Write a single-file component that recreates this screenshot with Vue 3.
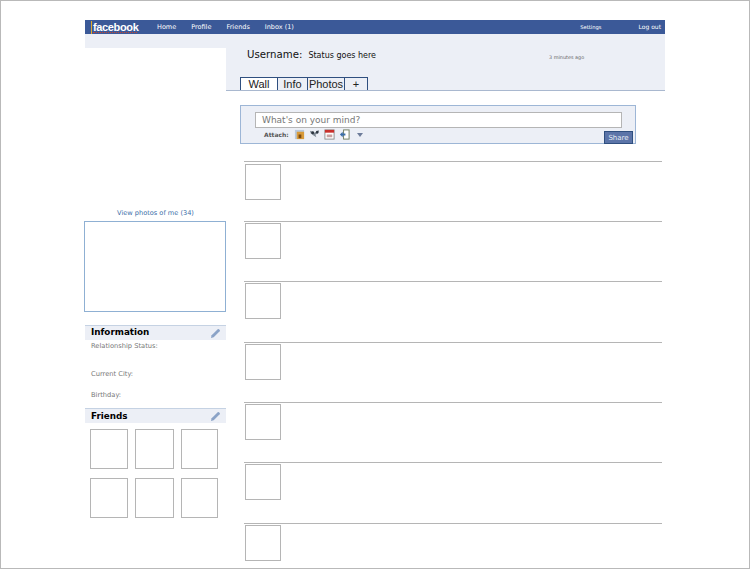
<script setup>
const navLinks = ['Home', 'Profile', 'Friends', 'Inbox (1)']
const tabs = ['Wall', 'Info', 'Photos', '+']
const friends = 6
const posts = [60, 60, 61, 60, 60, 61, 45]
</script>

<template>
  <div class="page">
    <div class="sheet">
      <header class="topbar">
        <div class="logo"><span class="logo-mark"></span><span class="logo-text">facebook</span></div>
        <nav class="nav">
          <a v-for="link in navLinks" :key="link">{{ link }}</a>
        </nav>
        <div class="nav-right">
          <a class="settings">Settings</a>
          <a>Log out</a>
        </div>
      </header>

      <div class="columns">
        <aside class="left">
          <div class="left-band"></div>
          <a class="view-photos">View photos of me (34)</a>
          <div class="photo-box"></div>

          <div class="section-head info-head">
            <span>Information</span>
            <svg class="pencil" viewBox="0 0 12 12"><path d="M1 11l.8-3L8.4 1.4a1 1 0 0 1 1.4 0l.8.8a1 1 0 0 1 0 1.4L4 10.2z" fill="#8ba3c7"/></svg>
          </div>
          <div class="info-list">
            <p class="first">Relationship Status:</p>
            <p class="second">Current City:</p>
            <p class="third">Birthday:</p>
          </div>

          <div class="section-head friends-head">
            <span>Friends</span>
            <svg class="pencil" viewBox="0 0 12 12"><path d="M1 11l.8-3L8.4 1.4a1 1 0 0 1 1.4 0l.8.8a1 1 0 0 1 0 1.4L4 10.2z" fill="#8ba3c7"/></svg>
          </div>
          <div class="friends">
            <div v-for="n in friends" :key="n" class="friend"></div>
          </div>
        </aside>

        <main class="right">
          <section class="profile">
            <div class="profile-line">
              <span class="username">Username:</span>
              <span class="status">Status goes here</span>
              <span class="time">3 minutes ago</span>
            </div>
            <div class="tabs">
              <div v-for="tab in tabs" :key="tab" class="tab" :class="{ active: tab === 'Wall' }">{{ tab }}</div>
            </div>
          </section>

          <section class="composer">
            <div class="input">What's on your mind?</div>
            <div class="composer-row">
              <span class="attach">Attach:</span>
              <svg class="ico" viewBox="0 0 12 12"><rect x="1" y="1" width="10" height="10" fill="#b9c9dd"/><rect x="3" y="3" width="8" height="8" fill="#d89a3a"/><rect x="5" y="6" width="3" height="4" fill="#7a4a12"/></svg>
              <svg class="ico" viewBox="0 0 12 12"><path d="M1 2l5 2 5-3-1 4-3 1 1 3-3-2-3-2z" fill="#7d8792"/><circle cx="4" cy="4" r="1.6" fill="#2d3640"/><circle cx="9" cy="3.4" r="1.4" fill="#2d3640"/></svg>
              <svg class="ico" viewBox="0 0 12 12"><rect x="1" y="1" width="10" height="10" fill="#fff" stroke="#8a8a8a"/><rect x="1" y="1" width="10" height="3" fill="#c9302c"/><rect x="3" y="6" width="6" height="3" fill="#c9a0a0"/></svg>
              <svg class="ico" viewBox="0 0 12 12"><rect x="5" y="1" width="6" height="10" fill="#fff" stroke="#6b7a5a"/><path d="M1 6l3-3v2h3v2H4v2z" fill="#3b6ea8"/></svg>
              <span class="caret"></span>
              <button class="share" type="button">Share</button>
            </div>
          </section>

          <section class="feed">
            <article v-for="(h, i) in posts" :key="i" class="post" :style="{ height: h + 'px' }">
              <div class="avatar"></div>
            </article>
          </section>
        </main>
      </div>
    </div>
  </div>
</template>

<style scoped>
.page {
  width: 750px;
  height: 569px;
  box-sizing: border-box;
  border: 1px solid #b9b9b9;
  padding: 19px 0 0 84px;
  overflow: hidden;
  background: #fff;
  font-family: "DejaVu Sans", sans-serif;
}
.sheet { width: 580px; }
.topbar {
  height: 14px;
  background: #3b5998;
  display: flex;
  align-items: center;
  color: #fff;
  font-size: 6.5px;
}
.logo {
  position: relative;
  width: 72px;
  padding-left: 8px;
  box-sizing: border-box;
  font: bold 11px "Liberation Sans", sans-serif;
  letter-spacing: -0.35px;
}
.logo-text {
  display: block;
  width: 44px;
  height: 12px;
  line-height: 12px;
  box-sizing: border-box;
  border-bottom: 1px dotted #c8452f;
}
.logo-mark {
  position: absolute;
  left: 6px;
  top: 0;
  width: 1px;
  height: 13px;
  background: #e0a92e;
}
.nav { display: flex; gap: 15px; }
.nav-right {
  margin-left: auto;
  display: flex;
  gap: 37px;
  padding-right: 4px;
  font-size: 6px;
}
.settings { font-size: 5.2px; line-height: 8px; }
.columns { display: flex; align-items: flex-start; }
.left { width: 141px; flex: none; }
.left-band { height: 14px; background: #eceff6; }
.view-photos {
  display: block;
  margin-top: 160px;
  height: 13px;
  line-height: 10px;
  text-align: center;
  font-size: 6.6px;
  color: #3b6ea8;
}
.photo-box {
  margin-left: -1px;
  width: 140px;
  height: 89px;
  border: 1px solid #8fb0d3;
}
.section-head {
  display: flex;
  align-items: center;
  justify-content: space-between;
  height: 14px;
  padding: 0 5px 0 6px;
  background: #eceff6;
  border-top: 1px solid #c5d2e3;
  color: #000;
  font: bold 8.8px "DejaVu Sans", sans-serif;
}
.info-head { margin-top: 13px; }
.info-head span { margin-bottom: 2px; }
.pencil { width: 11px; height: 11px; }
.info-list { height: 68px; color: #777; font-size: 6.7px; padding-left: 6px; }
.info-list p { margin: 0; }
.first { padding-top: 2px; }
.second { padding-top: 20px; }
.third { padding-top: 13px; }
.friends {
  display: grid;
  grid-template-columns: 38px 39px 37px;
  column-gap: 7px;
  row-gap: 9px;
  padding: 6px 0 0 5px;
}
.friend {
  height: 40px;
  box-sizing: border-box;
  border: 1px solid #b5b5b5;
}
.right { flex: 1; }
.profile {
  height: 57px;
  background: #eceff6;
  border-bottom: 1px solid #a9b8cf;
  box-sizing: border-box;
  display: flex;
  flex-direction: column;
  justify-content: space-between;
  padding-left: 14px;
}
.profile-line {
  display: flex;
  align-items: baseline;
  padding: 15px 0 0 7px;
}
.username { font-size: 10.2px; color: #111; }
.status { font-size: 8px; color: #111; margin-left: 6px; }
.time { font-size: 4.9px; color: #666; margin-left: 173px; position: relative; top: 1px; }
.tabs { display: flex; height: 13px; }
.tab {
  box-sizing: border-box;
  height: 13px;
  border: 1px solid #2f4f7f;
  border-bottom: none;
  margin-right: -1px;
  width: 38px;
  text-align: center;
  font: 11px/13px "Liberation Sans", sans-serif;
  color: #222;
}
.tab:nth-child(2) { width: 31px; }
.tab:nth-child(3) { width: 38px; }
.tab:nth-child(4) { width: 24px; }
.tab.active { background: #fff; }
.composer {
  margin: 14px 0 0 14px;
  width: 396px;
  height: 39px;
  box-sizing: border-box;
  border: 1px solid #9db6d6;
  background: #eceff6;
  padding: 6px 0 0 14px;
}
.input {
  width: 367px;
  height: 16px;
  box-sizing: border-box;
  border: 1px solid #b5b5b5;
  background: #fff;
  padding-left: 6px;
  font: 9px/14px "DejaVu Sans", sans-serif;
  color: #777;
}
.composer-row {
  display: flex;
  align-items: center;
  gap: 4px;
  padding-left: 9px;
  height: 13px;
  position: relative;
}
.attach { font: bold 6px "DejaVu Sans", sans-serif; color: #555; margin-right: 1px; }
.ico { width: 11px; height: 11px; }
.caret {
  margin-left: 3px;
  border: 3px solid transparent;
  border-top: 4px solid #6d7c9a;
  border-bottom: none;
}
.share {
  position: absolute;
  right: 2px;
  top: 3px;
  width: 29px;
  height: 13px;
  padding: 0;
  border: 1px solid #2f4f7f;
  background: #5b74a8;
  color: #e6ebf4;
  font: 7px "DejaVu Sans", sans-serif;
}
.feed { padding: 17px 0 0 18px; width: 418px; }
.post {
  border-top: 1px solid #b5b5b5;
  box-sizing: border-box;
  padding: 1px 0 0 1px;
}
.post:first-child { padding-top: 2px; }
.avatar {
  width: 36px;
  height: 36px;
  box-sizing: border-box;
  border: 1px solid #b5b5b5;
}
</style>
